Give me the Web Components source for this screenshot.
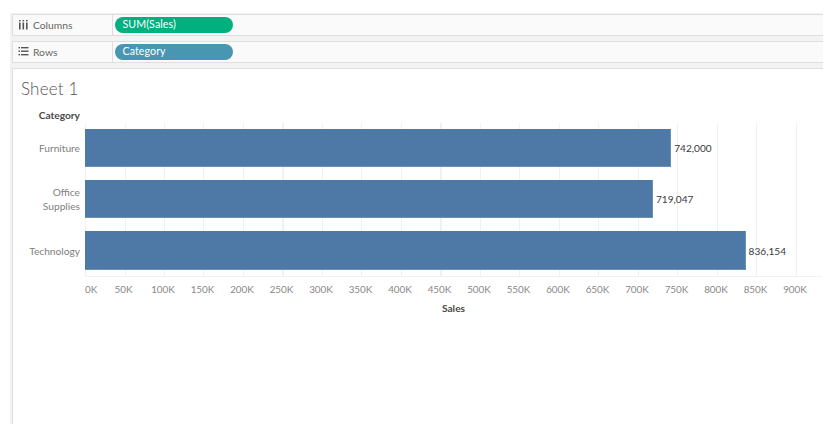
<!doctype html>
<html><head><meta charset="utf-8"><style>
html,body{margin:0;padding:0;background:#fff}
body{width:838px;height:433px;overflow:hidden;font-family:"Lato","Noto Sans",sans-serif}
</style></head><body>
<x-app>
  <x-shelf label="Columns" icon="cols" color="#00b180">SUM(Sales)</x-shelf>
  <x-shelf label="Rows" icon="rows" color="#4996b2">Category</x-shelf>
  <x-sheet title-text="Sheet 1"><x-bar-chart></x-bar-chart></x-sheet>
</x-app>
<script>
class XApp extends HTMLElement{constructor(){super();this.attachShadow({mode:'open'}).innerHTML=`<style>
:host{display:flex;flex-direction:column;box-sizing:border-box;width:813px;height:411px;margin:13px 0 0 10px;background:#f3f3f3;padding:1px 0 0 2px;gap:5px}
::slotted(x-sheet){flex:1}
</style><slot></slot>`}}
class XShelf extends HTMLElement{constructor(){super();
const c=this.getAttribute('color'),l=this.getAttribute('label');
const ic=this.getAttribute('icon')==='cols'
?`<svg width="11" height="11" viewBox="0 0 11 11"><g fill="#555"><rect x="1" y="3.5" width="1.6" height="7"/><rect x="4.5" y="3.5" width="1.6" height="7"/><rect x="8" y="3.5" width="1.6" height="7"/><rect x="1" y="1" width="1.6" height="1.4"/><rect x="4.5" y="1" width="1.6" height="1.4"/><rect x="8" y="1" width="1.6" height="1.4"/></g></svg>`
:`<svg width="11" height="11" viewBox="0 0 11 11"><g fill="#555"><rect x="0.5" y="1" width="1.5" height="1.4"/><rect x="0.5" y="4.5" width="1.5" height="1.4"/><rect x="0.5" y="8" width="1.5" height="1.4"/><rect x="3" y="1" width="7.5" height="1.4"/><rect x="3" y="4.5" width="7.5" height="1.4"/><rect x="3" y="8" width="7.5" height="1.4"/></g></svg>`;
this.attachShadow({mode:'open'}).innerHTML=`<style>
:host{display:flex;box-sizing:border-box;height:22px;background:#fafafa;border:1px solid #dedede;border-right:0;flex:none}
.label{box-sizing:border-box;width:100px;flex:none;display:flex;align-items:center;gap:4px;padding:0 0 1px 5px;border-right:1px solid #dedede;font-size:10.3px;color:#666}
svg{flex:none}
.pill{box-sizing:border-box;width:118px;height:16px;margin:2px 0 0 1.5px;border-radius:8px;background:${c};color:#fff;font-size:10.6px;line-height:15px;padding-left:8px;letter-spacing:.1px}
</style><div class="label">${ic}<span>${l}</span></div><div class="pill"><slot></slot></div>`}}
class XSheet extends HTMLElement{constructor(){super();
this.attachShadow({mode:'open'}).innerHTML=`<style>
:host{display:flex;flex-direction:column;background:#fff;border:1px solid #dedede;border-right:0;border-bottom:0;min-height:0}
h1{margin:0;font-weight:300;font-size:17px;line-height:20px;color:#555;padding:10px 0 0 8px;letter-spacing:.2px}
</style><h1>${this.getAttribute('title-text')}</h1><slot></slot>`}}
class XBarChart extends HTMLElement{constructor(){super();
const data=[['Furniture',742000,38],['Office<br>Supplies',719047,38],['Technology',836154,39]];
const fmt=n=>n.toLocaleString('en-US');
const step=39.5,k=step/50000;
const rows=data.map(([n,v,h])=>`<div class="rl" style="height:${h}px">${n}</div>`).join('');
const bars=data.map(([n,v,h])=>`<div class="row" style="height:${h}px"><div class="bar" style="width:${(v*k).toFixed(1)}px"></div><span class="val">${fmt(v)}</span></div>`).join('');
let t='';for(let i=0;i<=18;i++)t+=`<span class="${i?'t':'t first'}">${i*50}K</span>`;
this.attachShadow({mode:'open'}).innerHTML=`<style>
:host{display:grid;grid-template-columns:72px 737px;grid-template-rows:15px 154px 23px auto;margin-top:9px}
.hdr{font-size:10.2px;font-weight:700;color:#4a4a4a;text-align:right;padding-right:5px;line-height:15px;grid-column:1}
.plotgap{grid-column:2}
.labels{grid-column:1;display:flex;flex-direction:column;gap:13px;padding-top:6px}
.rl{box-sizing:border-box;display:flex;align-items:center;justify-content:flex-end;text-align:right;padding-right:5px;font-size:10.2px;line-height:14px;color:#808080}
.plot{grid-column:2;box-sizing:border-box;display:flex;flex-direction:column;gap:13px;padding-top:6px;border-bottom:1px solid #f0f0f0;
background:repeating-linear-gradient(to right,#f1f1f1 0 1px,transparent 1px 39.5px) 0 0/712px 100% no-repeat}
.row{display:flex;align-items:center}
.bar{box-sizing:border-box;height:100%;background:#4e79a7;border:1px solid #6a90b8;border-width:0 1px 1px 0}
.val{font-size:10.1px;color:#3a3a3a;margin-left:3px}
.axis{grid-column:2;display:flex;align-items:center;font-size:9.9px;color:#888;margin-left:-1px}
.t{flex:none;width:39.5px;text-align:center}
.t.first{width:19.75px;text-align:left;padding-left:1px;box-sizing:border-box}
.title{grid-column:2;font-size:10.2px;font-weight:700;color:#4a4a4a;text-align:center;width:737px;line-height:16px;box-sizing:border-box}
.spacer{grid-column:1}
</style>
<div class="hdr">Category</div><div class="plotgap"></div>
<div class="labels">${rows}</div><div class="plot">${bars}</div>
<div class="spacer"></div><div class="axis">${t}</div>
<div class="spacer"></div><div class="title">Sales</div>`}}
customElements.define('x-app',XApp);customElements.define('x-shelf',XShelf);customElements.define('x-sheet',XSheet);customElements.define('x-bar-chart',XBarChart);
</script></body></html>
